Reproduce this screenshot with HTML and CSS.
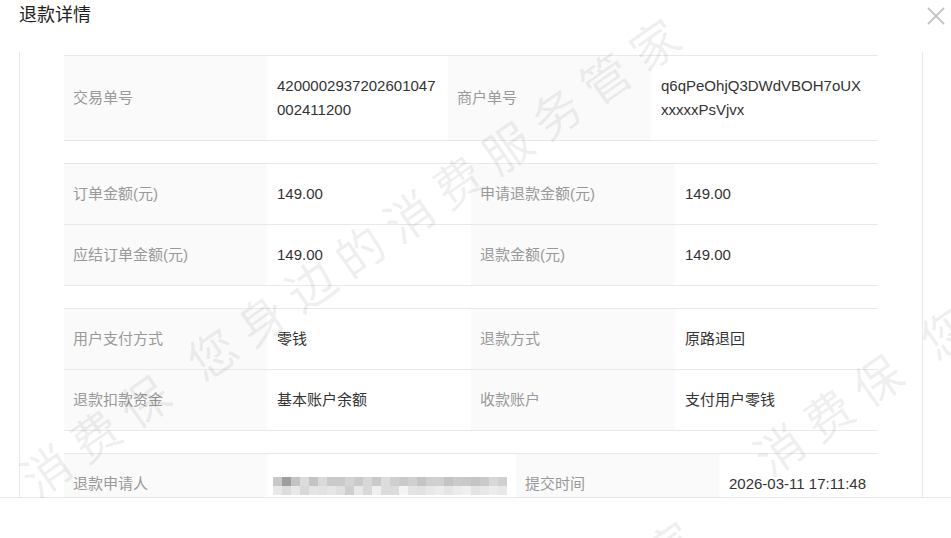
FILE: index.html
```html
<!DOCTYPE html>
<html lang="zh-CN">
<head>
    <meta charset="UTF-8">
    <meta name="viewport" content="width=device-width, initial-scale=1.0">
    <title>退款详情</title>
    <link rel="stylesheet" href="styles.css">
</head>
<body>
    <div class="dialog">
        <div class="dialog-head">
            <span class="dialog-title">退款详情</span>
            <span class="dialog-close">
                <svg width="18" height="18" viewBox="0 0 18 18">
                    <path d="M1 1 L17 17 M17 1 L1 17" stroke="#c4c4c4" stroke-width="2" fill="none"/>
                </svg>
            </span>
        </div>
        <div class="dialog-body">
            <div class="panel">
                <table class="info">
                    <colgroup><col style="width:203px"><col style="width:181px"><col style="width:203px"><col style="width:227px"></colgroup>
                    <tr>
                        <td class="label">交易单号</td>
                        <td>4200002937202601047002411200</td>
                        <td class="label">商户单号</td>
                        <td>q6qPeOhjQ3DWdVBOH7oUXxxxxxPsVjvx</td>
                    </tr>
                </table>
                <table class="info">
                    <colgroup><col style="width:203px"><col style="width:204px"><col style="width:204px"><col style="width:203px"></colgroup>
                    <tr>
                        <td class="label">订单金额(元)</td>
                        <td>149.00</td>
                        <td class="label">申请退款金额(元)</td>
                        <td>149.00</td>
                    </tr>
                    <tr>
                        <td class="label">应结订单金额(元)</td>
                        <td>149.00</td>
                        <td class="label">退款金额(元)</td>
                        <td>149.00</td>
                    </tr>
                </table>
                <table class="info">
                    <colgroup><col style="width:203px"><col style="width:204px"><col style="width:204px"><col style="width:203px"></colgroup>
                    <tr>
                        <td class="label">用户支付方式</td>
                        <td>零钱</td>
                        <td class="label">退款方式</td>
                        <td>原路退回</td>
                    </tr>
                    <tr>
                        <td class="label">退款扣款资金</td>
                        <td>基本账户余额</td>
                        <td class="label">收款账户</td>
                        <td>支付用户零钱</td>
                    </tr>
                </table>
                <table class="info">
                    <colgroup><col style="width:203px"><col style="width:249px"><col style="width:203px"><col style="width:159px"></colgroup>
                    <tr>
                        <td class="label">退款申请人</td>
                        <td class="blurred">
                            <svg class="mosaic" width="234" height="18" viewBox="0 0 234 18">
                                <g>
                                    <rect x="0" y="0" width="9" height="9" fill="#c8c8c8"/>
                                    <rect x="9" y="0" width="9" height="9" fill="#9e9e9e"/>
                                    <rect x="18" y="0" width="9" height="9" fill="#c4c4c4"/>
                                    <rect x="27" y="0" width="9" height="9" fill="#dcdcdc"/>
                                    <rect x="36" y="0" width="9" height="9" fill="#c4c4c4"/>
                                    <rect x="45" y="0" width="9" height="9" fill="#dadada"/>
                                    <rect x="54" y="0" width="9" height="9" fill="#cacaca"/>
                                    <rect x="63" y="0" width="9" height="9" fill="#cacaca"/>
                                    <rect x="72" y="0" width="9" height="9" fill="#d4d4d4"/>
                                    <rect x="81" y="0" width="9" height="9" fill="#cacaca"/>
                                    <rect x="90" y="0" width="9" height="9" fill="#d8d8d8"/>
                                    <rect x="99" y="0" width="9" height="9" fill="#cacaca"/>
                                    <rect x="108" y="0" width="9" height="9" fill="#dcdcdc"/>
                                    <rect x="117" y="0" width="9" height="9" fill="#cfcfcf"/>
                                    <rect x="126" y="0" width="9" height="9" fill="#cacaca"/>
                                    <rect x="135" y="0" width="9" height="9" fill="#d0d0d0"/>
                                    <rect x="144" y="0" width="9" height="9" fill="#c4c4c4"/>
                                    <rect x="153" y="0" width="9" height="9" fill="#cfcfcf"/>
                                    <rect x="162" y="0" width="9" height="9" fill="#d0d0d0"/>
                                    <rect x="171" y="0" width="9" height="9" fill="#c4c4c4"/>
                                    <rect x="180" y="0" width="9" height="9" fill="#cacaca"/>
                                    <rect x="189" y="0" width="9" height="9" fill="#c8c8c8"/>
                                    <rect x="198" y="0" width="9" height="9" fill="#c4c4c4"/>
                                    <rect x="207" y="0" width="9" height="9" fill="#cacaca"/>
                                    <rect x="216" y="0" width="9" height="9" fill="#d8d8d8"/>
                                    <rect x="225" y="0" width="9" height="9" fill="#d0d0d0"/>
                                </g>
                                <g>
                                    <rect x="0" y="9" width="9" height="9" fill="#e8e8e8"/>
                                    <rect x="9" y="9" width="9" height="9" fill="#dcdcdc"/>
                                    <rect x="18" y="9" width="9" height="9" fill="#e8e8e8"/>
                                    <rect x="27" y="9" width="9" height="9" fill="#d8d8d8"/>
                                    <rect x="36" y="9" width="9" height="9" fill="#e4e4e4"/>
                                    <rect x="45" y="9" width="9" height="9" fill="#e2e2e2"/>
                                    <rect x="54" y="9" width="9" height="9" fill="#e6e6e6"/>
                                    <rect x="63" y="9" width="9" height="9" fill="#e0e0e0"/>
                                    <rect x="72" y="9" width="9" height="9" fill="#cfcfcf"/>
                                    <rect x="81" y="9" width="9" height="9" fill="#e8e8e8"/>
                                    <rect x="90" y="9" width="9" height="9" fill="#d8d8d8"/>
                                    <rect x="99" y="9" width="9" height="9" fill="#efefef"/>
                                    <rect x="108" y="9" width="9" height="9" fill="#dcdcdc"/>
                                    <rect x="117" y="9" width="9" height="9" fill="#dcdcdc"/>
                                    <rect x="126" y="9" width="9" height="9" fill="#f4f4f4"/>
                                    <rect x="135" y="9" width="9" height="9" fill="#e4e4e4"/>
                                    <rect x="144" y="9" width="9" height="9" fill="#e2e2e2"/>
                                    <rect x="153" y="9" width="9" height="9" fill="#e8e8e8"/>
                                    <rect x="162" y="9" width="9" height="9" fill="#ececec"/>
                                    <rect x="171" y="9" width="9" height="9" fill="#e6e6e6"/>
                                    <rect x="180" y="9" width="9" height="9" fill="#ececec"/>
                                    <rect x="189" y="9" width="9" height="9" fill="#f0f0f0"/>
                                    <rect x="198" y="9" width="9" height="9" fill="#e4e4e4"/>
                                    <rect x="207" y="9" width="9" height="9" fill="#e8e8e8"/>
                                    <rect x="216" y="9" width="9" height="9" fill="#ececec"/>
                                    <rect x="225" y="9" width="9" height="9" fill="#e8e8e8"/>
                                </g>
                            </svg>
                        </td>
                        <td class="label">提交时间</td>
                        <td>2026-03-11 17:11:48</td>
                    </tr>
                </table>
            </div>
        </div>
        <div class="dialog-foot"></div>

        <!-- watermark overlay -->
        <div class="watermark">
            <span class="wm wm-a">消费保 您身边的消费服务管家</span>
            <span class="wm wm-b">消费保 您身边的消费服务管家</span>
            <span class="wm wm-c">消费保 您身边的消费服务管家</span>
        </div>
    </div>
</body>
</html>
```

FILE: styles.css
```css
html, body {
    margin: 0;
    padding: 0;
    background: #ffffff;
}
body {
    font-family: "Liberation Sans", "Noto Sans CJK SC", sans-serif;
    color: #333333;
}
.dialog {
    position: relative;
    width: 951px;
    height: 538px;
    overflow: hidden;
    background: #ffffff;
}
.dialog-head {
    display: flex;
    justify-content: space-between;
    align-items: flex-start;
    height: 52px;
    padding: 0 6px 0 19px;
    box-sizing: border-box;
}
.dialog-title {
    font-size: 18px;
    line-height: 30px;
    color: #222222;
}
.dialog-close {
    margin-top: 7px;
    display: flex;
}
.dialog-body {
    height: 445px;
    overflow: hidden;
}
.panel {
    margin: 0 28px 0 19px;
    padding: 3px 44px 0;
    border-left: 1px solid #e8e8e8;
    border-right: 1px solid #e8e8e8;
}
.info {
    width: 100%;
    table-layout: fixed;
    border-collapse: collapse;
    margin-bottom: 22px;
}
.info td {
    border-top: 1px solid #e9e9e9;
    border-bottom: 1px solid #e9e9e9;
    padding: 18px 10px;
    font-size: 15px;
    line-height: 24px;
    color: #333333;
    vertical-align: middle;
    word-break: break-all;
}
.info td.label {
    background: #fafafa;
    color: #999999;
    padding-left: 9px;
}
.info td.blurred {
    padding-left: 6px;
}
.mosaic {
    display: block;
    margin-top: 4px;
}
.dialog-foot {
    border-top: 1px solid #e8e8e8;
    height: 40px;
    background: #ffffff;
}
.watermark {
    position: absolute;
    left: 0;
    top: 0;
    right: 0;
    bottom: 0;
    pointer-events: none;
    overflow: hidden;
}
.wm {
    position: absolute;
    white-space: nowrap;
    font-family: "Noto Sans CJK SC", sans-serif;
    font-size: 48px;
    line-height: 48px;
    letter-spacing: 12px;
    color: rgba(0, 0, 0, 0.075);
    transform: rotate(-35deg);
    transform-origin: 0 50%;
}
.wm-a {
    left: 25px;
    top: 458px;
}
.wm-b {
    left: 758px;
    top: 437px;
}
.wm-c {
    left: 40px;
    top: 961px;
}
```
